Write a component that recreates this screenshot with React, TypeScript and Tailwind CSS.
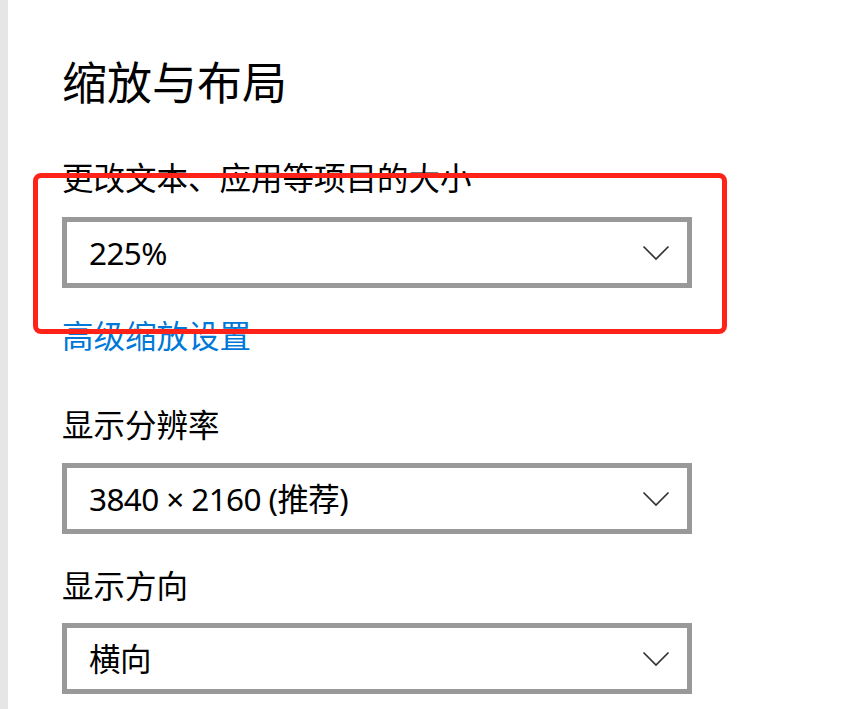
// Windows display settings: scale & layout section, with a red annotation box.

const font = "font-['Noto_Sans','Noto_Sans_CJK_SC',sans-serif]";

function Chevron() {
  return (
    <svg width="28" height="16" viewBox="0 0 28 16" fill="none" aria-hidden>
      <polyline points="1.5,1.5 14,14 26.5,1.5" stroke="#333333" strokeWidth="1.7" />
    </svg>
  );
}

function Select({ value }: { value: string }) {
  return (
    <div className="flex h-[71px] w-[630px] items-center justify-between border-[5px] border-[#999999] bg-white pl-[22px] pr-[17px]">
      <span className="text-[31.5px] leading-[32px] tracking-[-0.6px] text-black">{value}</span>
      <Chevron />
    </div>
  );
}

export default function App() {
  return (
    <div className={`relative flex h-[709px] w-[842px] overflow-hidden bg-white ${font}`}>
      <div className="w-[8px] shrink-0 bg-[#e6e6e6]" />

      <div className="flex flex-col pl-[54px] pt-[60px]">
        <h1 className="text-[45px] leading-[45px] font-normal text-black">缩放与布局</h1>

        <p className="mt-[57px] text-[31.5px] leading-[32px] text-black">更改文本、应用等项目的大小</p>
        <div className="mt-[23px]">
          <Select value="225%" />
        </div>

        <a className="mt-[32px] w-fit text-[31.5px] leading-[32px] text-[#0078d7]">高级缩放设置</a>

        <p className="mt-[57px] text-[31.5px] leading-[32px] text-black">显示分辨率</p>
        <div className="mt-[22px]">
          <Select value="3840 × 2160 (推荐)" />
        </div>

        <p className="mt-[36px] text-[31.5px] leading-[32px] text-black">显示方向</p>
        <div className="mt-[21px]">
          <Select value="横向" />
        </div>
      </div>

      {/* annotation drawn over the first setting */}
      <div className="pointer-events-none absolute left-[33px] top-[173px] h-[161px] w-[694px] rounded-[8px] border-[5px] border-[#ff2218]" />
    </div>
  );
}
